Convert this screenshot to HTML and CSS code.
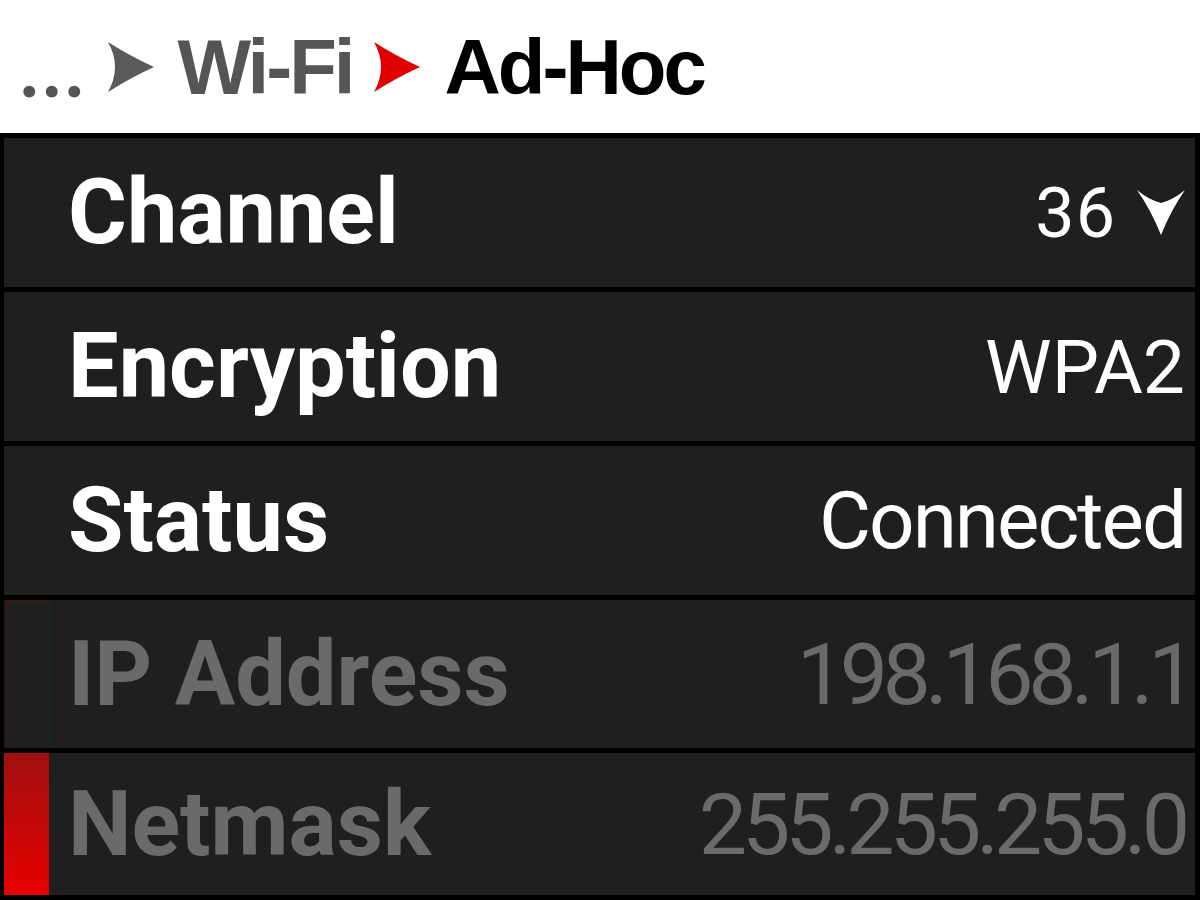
FILE: index.html
```html
<!DOCTYPE html>
<html>
<head>
<meta charset="utf-8">
<link rel="stylesheet" href="styles.css">
</head>
<body>
<div class="page">
  <div class="crumbs">
    <span class="dots">...</span>
    <svg class="sep" width="46" height="50" viewBox="0 0 46 50"><path d="M0 0 Q22 14 46 25 Q22 36 0 50 Q14 25 0 0 Z" fill="#5a5a5a"/></svg>
    <span class="crumb">Wi-Fi</span>
    <svg class="sep" width="46" height="50" viewBox="0 0 46 50"><path d="M0 0 Q22 14 46 25 Q22 36 0 50 Q14 25 0 0 Z" fill="#e00000"/></svg>
    <span class="crumb current">Ad-Hoc</span>
  </div>
  <div class="list">
    <div class="row">
      <span class="label">Channel</span>
      <span class="value v-channel">36<svg class="drop" width="48" height="45" viewBox="0 0 48 45"><path d="M0 0 Q12 10 24 13 Q36 10 48 0 Q34 20 24 45 Q14 20 0 0 Z" fill="#fff"/></svg></span>
    </div>
    <div class="row">
      <span class="label">Encryption</span>
      <span class="value v-enc">WPA2</span>
    </div>
    <div class="row">
      <span class="label">Status</span>
      <span class="value v-status">Connected</span>
    </div>
    <div class="row disabled marker-outline">
      <span class="label">IP Address</span>
      <span class="value v-ip">198.168.1.1</span>
    </div>
    <div class="row disabled marker-active last">
      <span class="label">Netmask</span>
      <span class="value v-mask">255.255.255.0</span>
    </div>
  </div>
</div>
</body>
</html>
```

FILE: styles.css
```css
html, body {
  margin: 0;
  padding: 0;
  background: #fff;
}
.page {
  width: 1200px;
  height: 900px;
  display: flex;
  flex-direction: column;
}
.crumbs {
  height: 133px;
  flex: none;
  display: flex;
  align-items: center;
  padding-left: 20px;
  font-family: "Liberation Sans", Arial, sans-serif;
  font-weight: bold;
  font-size: 78px;
  letter-spacing: -3px;
  box-sizing: border-box;
}
.dots {
  font-family: Lato, "Liberation Sans", sans-serif;
  color: #555;
  letter-spacing: 4px;
  font-size: 78px;
  margin-right: 20px;
}
.sep {
  flex: none;
  margin-right: 24px;
}
.crumb {
  color: #555;
  margin-right: 22px;
  line-height: 1;
}
.crumb.current {
  color: #000;
}
.list {
  flex: 1;
  display: flex;
  flex-direction: column;
  background: #000;
  border-top: 5px solid #000;
  border-left: 4px solid #000;
  border-right: 5px solid #000;
  border-bottom: 5px solid #000;
  gap: 5px;
}
.row {
  height: 149px;
  flex: none;
  background: #1f1f1f;
  display: flex;
  align-items: center;
  justify-content: space-between;
  padding-left: 64px;
  padding-right: 10px;
  box-sizing: border-box;
  position: relative;
}
.row.last {
  flex: 1;
  height: auto;
}
.row:nth-child(4) {
  height: 148px;
}
.label {
  font-family: Roboto, "Noto Sans", sans-serif;
  font-weight: bold;
  font-size: 90px;
  color: #fff;
}
.value {
  font-family: Roboto, "Noto Sans", sans-serif;
  font-weight: normal;
  color: #fff;
  display: flex;
  align-items: center;
}
.v-channel { font-size: 70px; letter-spacing: 1px; }
.v-enc { font-size: 75px; }
.v-status { font-size: 80px; letter-spacing: -2px; }
.v-ip { font-size: 86px; letter-spacing: -5.5px; margin-right: -6px; }
.v-mask { font-size: 86px; letter-spacing: -5px; }
.drop {
  margin-left: 21px;
}
.disabled .label,
.disabled .value {
  color: #6a6a6a;
}
.marker-outline::before {
  content: "";
  position: absolute;
  left: 0;
  top: 0;
  bottom: 0;
  width: 46px;
  border-top: 1px solid #5a0f0f;
  border-right: 1px solid #123030;
  border-left: 1px solid #3a0a0a;
  box-sizing: border-box;
}
.marker-active::before {
  content: "";
  position: absolute;
  left: 0;
  top: 0;
  bottom: 0;
  width: 45px;
  background: linear-gradient(#a01010, #e80000);
}
```
